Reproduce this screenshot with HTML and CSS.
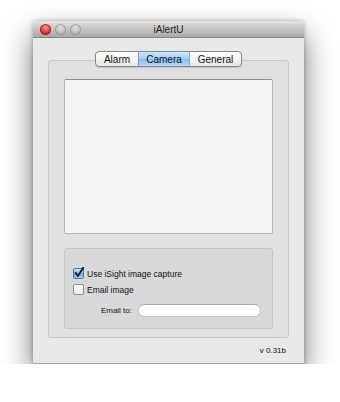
FILE: index.html
```html
<!DOCTYPE html>
<html lang="en">
<head>
    <meta charset="UTF-8">
    <title>iAlertU</title>
    <link rel="stylesheet" href="styles.css">
</head>
<body>
    <div class="window">
        <div class="titlebar">
            <div class="lights">
                <span class="light close"></span>
                <span class="light"></span>
                <span class="light"></span>
            </div>
            <div class="title">iAlertU</div>
        </div>

        <div class="content">
            <div class="tabs">
                <span class="tab">Alarm</span>
                <span class="tab active">Camera</span>
                <span class="tab">General</span>
            </div>

            <div class="tabbox">
                <div class="well"></div>

                <div class="options">
                    <label class="check-row">
                        <span class="checkbox checked">
                            <svg width="12" height="12" viewBox="0 0 12 12">
                                <path d="M2.6 5.8 L4.8 9 L10.2 0.9" fill="none" stroke="#17202c" stroke-width="1.9" stroke-linecap="round" stroke-linejoin="round"/>
                            </svg>
                        </span>
                        Use iSight image capture
                    </label>
                    <label class="check-row">
                        <span class="checkbox"></span>
                        Email image
                    </label>
                    <div class="email-row">
                        <span class="email-label">Email to:</span>
                        <span class="field"></span>
                    </div>
                </div>
            </div>

            <div class="version">v 0.31b</div>
        </div>
    </div>
</body>
</html>
```

FILE: styles.css
```css
* {
    box-sizing: border-box;
}

body {
    margin: 0;
    padding: 21px 0 0 33px;
    background-color: #fff;
    font-family: 'Liberation Sans', Arial, sans-serif;
    color: #111;
}

.window {
    width: 271px;
    height: 343px;
    display: flex;
    flex-direction: column;
    background-color: #e8e8e8;
    border-bottom: 1px solid #a0a0a0;
    box-shadow: 0 14px 30px rgba(0, 0, 0, 0.55), 0 0 4px rgba(0, 0, 0, 0.3);
    border-radius: 4px 4px 0 0;
}

.titlebar {
    height: 17px;
    display: flex;
    align-items: center;
    position: relative;
    background: linear-gradient(#e4e4e4, #c4c4c4 50%, #a8a8a8);
    border-bottom: 1px solid #858585;
    border-radius: 4px 4px 0 0;
}

.lights {
    display: flex;
    gap: 4px;
    padding-left: 7px;
}

.light {
    width: 11px;
    height: 11px;
    border-radius: 50%;
    background: radial-gradient(circle at 50% 35%, #e0e0e0, #b4b4b4 70%, #9e9e9e);
    box-shadow: inset 0 0 0 1px rgba(0, 0, 0, 0.16);
}

.light.close {
    background: radial-gradient(circle at 50% 35%, #ff9c9c, #e0262a 60%, #a3161a);
    box-shadow: inset 0 0 0 1px rgba(90, 0, 0, 0.35);
}

.title {
    position: absolute;
    left: 0;
    right: 0;
    text-align: center;
    font-size: 10px;
    color: #1e1e1e;
}

.content {
    flex: 1;
    display: flex;
    flex-direction: column;
    padding: 13px 15px 0 15px;
}

.tabs {
    align-self: center;
    display: flex;
    height: 16px;
    border: 1px solid #878787;
    border-radius: 4px;
    background: linear-gradient(#ffffff, #f4f4f4 50%, #e6e6e6);
    box-shadow: 0 1px 1px rgba(0, 0, 0, 0.15);
    position: relative;
    z-index: 1;
    font-size: 10px;
    overflow: hidden;
}

.tab {
    display: flex;
    align-items: center;
    justify-content: center;
    border-left: 1px solid #a5a5a5;
}

.tab:first-child {
    border-left: none;
    width: 42px;
}

.tab.active {
    width: 52px;
    background: linear-gradient(#cde5fb, #a2cdf6 50%, #86bbf1 52%, #b8dbfc);
    border-left-color: #7f9fc0;
    border-right: 1px solid #8aa8c8;
}

.tab:last-child {
    width: 51px;
    border-left: none;
}

.tabbox {
    margin-top: -7px;
    height: 278px;
    padding: 18px 15px 0 15px;
    background-color: #e0e0e0;
    border: 1px solid #c6c6c6;
    border-radius: 3px;
    display: flex;
    flex-direction: column;
    gap: 14px;
}

.well {
    height: 155px;
    flex-shrink: 0;
    background-color: #f4f4f4;
    border: 1px solid #b4b4b4;
    border-top-color: #8c8c8c;
    border-radius: 2px;
}

.options {
    height: 81px;
    flex-shrink: 0;
    background-color: #d8d8d8;
    border: 1px solid #c4c4c4;
    border-radius: 3px;
    padding: 19px 0 0 8px;
    display: flex;
    flex-direction: column;
    gap: 5px;
    font-size: 8.5px;
}

.check-row {
    display: flex;
    align-items: center;
    gap: 3px;
    height: 11px;
}

.checkbox {
    width: 11px;
    height: 11px;
    border: 1px solid #8f8f8f;
    border-radius: 2px;
    background: linear-gradient(#ffffff, #ececec);
    position: relative;
}

.checkbox.checked {
    border-color: #55779f;
    background: linear-gradient(#d3e8fb, #86baf0 50%, #5f9fe5 55%, #acd4fb);
}

.checkbox svg {
    position: absolute;
    left: -1px;
    top: -2px;
}

.email-row {
    display: flex;
    align-items: center;
    margin-top: 4px;
}

.email-label {
    width: 65px;
    text-align: right;
    padding-right: 6px;
    font-size: 8px;
}

.field {
    width: 123px;
    height: 13px;
    background-color: #fff;
    border: 1px solid #c4c4c4;
    border-top-color: #a9a9a9;
    border-radius: 7px;
}

.version {
    text-align: right;
    font-size: 8px;
    padding: 8px 3px 0 0;
}
```
